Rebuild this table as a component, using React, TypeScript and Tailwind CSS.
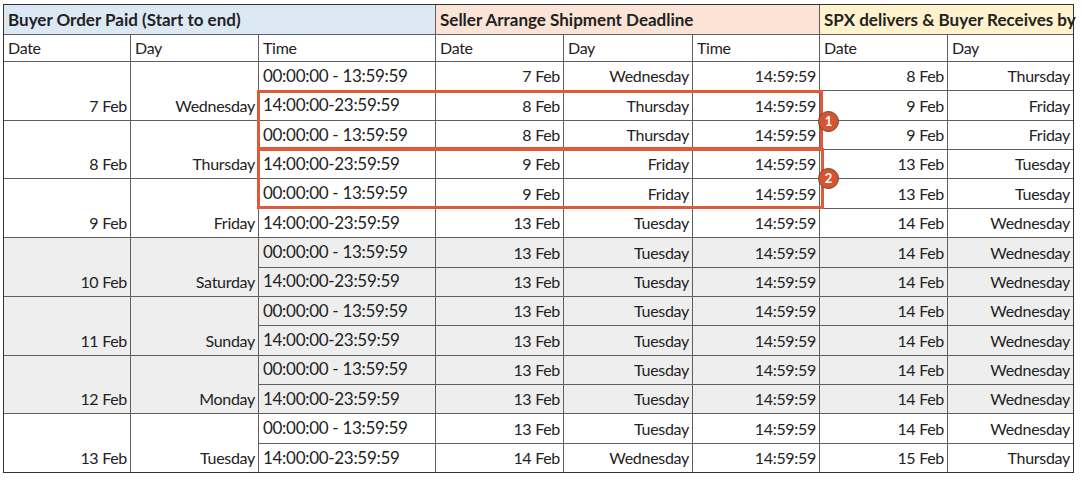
import React from "react";

type Slot = [string, string, string, string, string, string];
type Group = { date: string; day: string; gray?: boolean; slots: [Slot, Slot] };

const AM = "00:00:00 - 13:59:59";
const PM = "14:00:00-23:59:59";
const CUT = "14:59:59";

const groups: Group[] = [
  {
    date: "7 Feb",
    day: "Wednesday",
    slots: [
      [AM, "7 Feb", "Wednesday", CUT, "8 Feb", "Thursday"],
      [PM, "8 Feb", "Thursday", CUT, "9 Feb", "Friday"],
    ],
  },
  {
    date: "8 Feb",
    day: "Thursday",
    slots: [
      [AM, "8 Feb", "Thursday", CUT, "9 Feb", "Friday"],
      [PM, "9 Feb", "Friday", CUT, "13 Feb", "Tuesday"],
    ],
  },
  {
    date: "9 Feb",
    day: "Friday",
    slots: [
      [AM, "9 Feb", "Friday", CUT, "13 Feb", "Tuesday"],
      [PM, "13 Feb", "Tuesday", CUT, "14 Feb", "Wednesday"],
    ],
  },
  {
    date: "10 Feb",
    day: "Saturday",
    gray: true,
    slots: [
      [AM, "13 Feb", "Tuesday", CUT, "14 Feb", "Wednesday"],
      [PM, "13 Feb", "Tuesday", CUT, "14 Feb", "Wednesday"],
    ],
  },
  {
    date: "11 Feb",
    day: "Sunday",
    gray: true,
    slots: [
      [AM, "13 Feb", "Tuesday", CUT, "14 Feb", "Wednesday"],
      [PM, "13 Feb", "Tuesday", CUT, "14 Feb", "Wednesday"],
    ],
  },
  {
    date: "12 Feb",
    day: "Monday",
    gray: true,
    slots: [
      [AM, "13 Feb", "Tuesday", CUT, "14 Feb", "Wednesday"],
      [PM, "13 Feb", "Tuesday", CUT, "14 Feb", "Wednesday"],
    ],
  },
  {
    date: "13 Feb",
    day: "Tuesday",
    slots: [
      [AM, "13 Feb", "Tuesday", CUT, "14 Feb", "Wednesday"],
      [PM, "14 Feb", "Wednesday", CUT, "15 Feb", "Thursday"],
    ],
  },
];

const subHeads = ["Date", "Day", "Time", "Date", "Day", "Time", "Date", "Day"];

function Cell({
  children,
  gray,
  left,
  span,
}: {
  children: React.ReactNode;
  gray?: boolean;
  left?: boolean;
  span?: boolean;
}) {
  return (
    <div
      className={`flex items-end whitespace-nowrap pb-[2px] ${
        left ? "justify-start pl-[4px] text-[17px]" : "justify-end pr-[3px]"
      } ${gray ? "bg-[#eeeeee]" : "bg-white"} ${span ? "row-span-2" : ""}`}
    >
      {children}
    </div>
  );
}

function Badge({ n, className }: { n: number; className: string }) {
  return (
    <div
      className={`absolute flex h-[21px] w-[21px] items-center justify-center rounded-full border-[1.5px] border-[#5e4a44] bg-[#d9532f] text-[13px] font-bold leading-none tracking-normal text-white ${className}`}
    >
      {n}
    </div>
  );
}

export default function App() {
  return (
    <div
      className="h-[480px] w-[1082px] bg-white pl-[3px] pt-[4px] text-[16px] tracking-[-0.3px] text-[#222]"
      style={{ fontFamily: "Lato, 'Open Sans', sans-serif" }}
    >
      <div className="relative w-max">
        <div className="grid grid-cols-[126px_127px_176px_127px_128px_126px_127px_125px] grid-rows-[29px_26px_repeat(14,28.36px)] gap-px border border-[#333] bg-[#5f5f5f]">
          {/* group headers */}
          <div className="col-span-3 flex items-center whitespace-nowrap bg-[#dde8f5] pl-[4px] text-[17px] font-bold tracking-normal">
            Buyer Order Paid (Start to end)
          </div>
          <div className="col-span-3 flex items-center whitespace-nowrap bg-[#fbe4d6] pl-[4px] text-[17px] font-bold tracking-normal">
            Seller Arrange Shipment Deadline
          </div>
          <div className="col-span-2 flex items-center whitespace-nowrap bg-[#fff2cc] pl-[4px] text-[17px] font-bold tracking-normal">
            SPX delivers &amp; Buyer Receives by
          </div>

          {subHeads.map((h, i) => (
            <div key={i} className="flex items-end bg-white pb-[1px] pl-[4px]">
              {h}
            </div>
          ))}

          {groups.map((g) => (
            <React.Fragment key={g.date}>
              <Cell gray={g.gray} span>
                {g.date}
              </Cell>
              <Cell gray={g.gray} span>
                {g.day}
              </Cell>
              {g.slots.map((s, si) =>
                s.map((v, vi) => (
                  <Cell key={`${si}-${vi}`} gray={g.gray} left={vi === 0}>
                    {v}
                  </Cell>
                ))
              )}
            </React.Fragment>
          ))}
        </div>

        {/* highlight boxes */}
        <div className="pointer-events-none absolute left-[254px] top-[86px] h-[60px] w-[566px] border-[3px] border-[#e2593a]" />
        <div className="pointer-events-none absolute left-[254px] top-[144px] h-[61px] w-[567px] border-[3px] border-[#e2593a]" />
        <Badge n={1} className="left-[815px] top-[107px]" />
        <Badge n={2} className="left-[815px] top-[164px]" />
      </div>
    </div>
  );
}
